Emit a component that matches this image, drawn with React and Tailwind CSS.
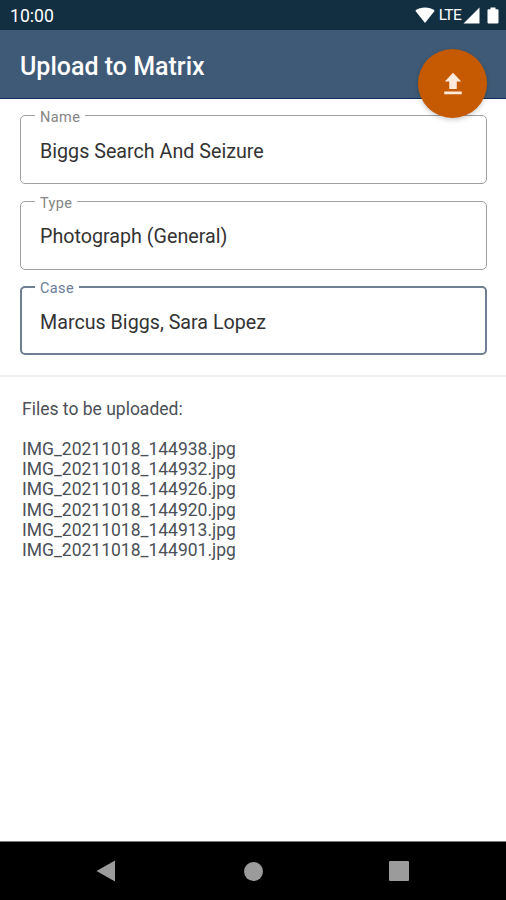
import React from 'react';

const fields = [
  { label: 'Name', value: 'Biggs Search And Seizure' },
  { label: 'Type', value: 'Photograph (General)' },
  { label: 'Case', value: 'Marcus Biggs, Sara Lopez', focused: true },
];

const files = [
  'IMG_20211018_144938.jpg',
  'IMG_20211018_144932.jpg',
  'IMG_20211018_144926.jpg',
  'IMG_20211018_144920.jpg',
  'IMG_20211018_144913.jpg',
  'IMG_20211018_144901.jpg',
];

function StatusBar() {
  return (
    <div className="flex h-[30px] shrink-0 items-center justify-between bg-[#122f42] pl-[10px] pr-[7px] text-white">
      <span className="pt-[3px] text-[17.6px] leading-none">10:00</span>
      <div className="flex items-center">
        <svg width="20" height="16" viewBox="0 0 20 16" fill="currentColor">
          <path d="M10 16 0.3 3.8C3 1.6 6.3 0.5 10 0.5s7 1.1 9.7 3.3z" />
        </svg>
        <span className="ml-[4px] pt-[2px] text-[15.5px] leading-none tracking-[-0.7px]">LTE</span>
        <svg className="ml-[2px]" width="17" height="17" viewBox="0 0 17 17" fill="currentColor">
          <path d="M16.5 0.5v16H0.5z" />
        </svg>
        <svg className="ml-[7px]" width="12" height="17" viewBox="0 0 12 17" fill="currentColor">
          <path d="M3.5 0.5h5v1.7h2a1 1 0 0 1 1 1v12.3a1 1 0 0 1-1 1h-9a1 1 0 0 1-1-1V3.2a1 1 0 0 1 1-1h2z" />
        </svg>
      </div>
    </div>
  );
}

function Header() {
  return (
    <header className="relative flex h-[69px] shrink-0 items-center border-b border-[#0f2f63] bg-[#3f5a77] pl-[20px]">
      <h1 className="pt-[4px] text-[25px] font-medium leading-none text-white">Upload to Matrix</h1>
      <button
        aria-label="Upload"
        className="absolute right-[19px] top-[19px] z-10 flex size-[69px] items-center justify-center rounded-full bg-[#c65a02] shadow-[0_2px_5px_rgba(0,0,0,0.2)]"
      >
        <svg width="30" height="30" viewBox="0 0 24 24" fill="#fdeadb">
          <path d="M9 16h6v-6h3.6L12 3l-6.6 7H9zm-4 2h14v2.2H5z" />
        </svg>
      </button>
    </header>
  );
}

function Field({ label, value, focused }) {
  return (
    <div
      className={`relative flex h-[69px] items-center rounded-[5px] pt-[4px] ${
        focused ? 'border-2 border-[#6f7f91] pl-[18px]' : 'border border-[#a0a0a0] pl-[19px]'
      }`}
    >
      <label
        className={`absolute bg-white px-[5px] text-[14.5px] leading-[16px] tracking-[0.4px] ${
          focused ? '-top-[7px] left-[13px] text-[#6c7c96]' : '-top-[6px] left-[14px] text-[#858585]'
        }`}
      >
        {label}
      </label>
      <span className="text-[19.7px] leading-none text-[#333]">{value}</span>
    </div>
  );
}

function NavBar() {
  return (
    <nav className="flex h-[59px] shrink-0 items-center border-t border-[#7a7a7a] bg-black pl-[96px] text-[#9b9b9b]">
      <svg width="20" height="22" viewBox="0 0 20 22" fill="currentColor">
        <path d="M19 0.5v21L0.5 11z" />
      </svg>
      <span className="ml-[128px] size-[19px] rounded-full bg-current" />
      <span className="ml-[126px] size-[20px] rounded-[1px] bg-current" />
    </nav>
  );
}

export default function App() {
  return (
    <div className="flex h-screen w-full flex-col bg-white font-[Roboto,sans-serif]">
      <StatusBar />
      <Header />

      {/* Upload details */}
      <div className="flex flex-col gap-[16.6px] border-b-2 border-[#efefef] pb-[19.6px] pl-[20px] pr-[19px] pt-[16px]">
        {fields.map((field) => (
          <Field key={field.label} {...field} />
        ))}
      </div>

      {/* File list */}
      <div className="flex-1 px-[22px] pt-[22px] text-[17.5px] leading-[20.2px] text-[#4b5057]">
        <p className="mb-[20px]">Files to be uploaded:</p>
        <ul>
          {files.map((file) => (
            <li key={file}>{file}</li>
          ))}
        </ul>
      </div>

      <NavBar />
    </div>
  );
}
